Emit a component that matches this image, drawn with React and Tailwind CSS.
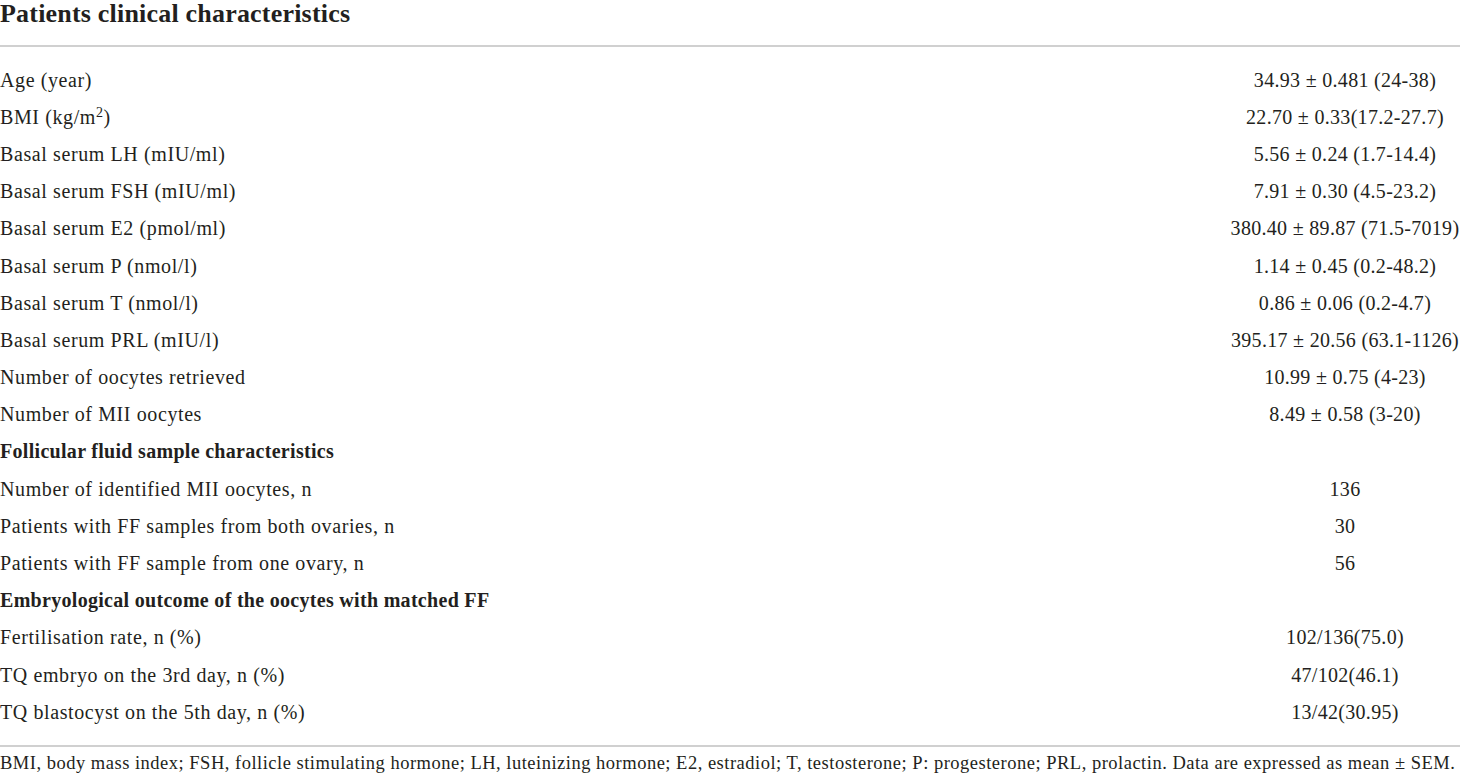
const rows = [
  { label: "Age (year)", value: "34.93 ± 0.481 (24-38)" },
  {
    label: (
      <>
        BMI (kg/m<sup className="text-[14px]">2</sup>)
      </>
    ),
    value: "22.70 ± 0.33(17.2-27.7)",
  },
  { label: "Basal serum LH (mIU/ml)", value: "5.56 ± 0.24 (1.7-14.4)" },
  { label: "Basal serum FSH (mIU/ml)", value: "7.91 ± 0.30 (4.5-23.2)" },
  { label: "Basal serum E2 (pmol/ml)", value: "380.40 ± 89.87 (71.5-7019)" },
  { label: "Basal serum P (nmol/l)", value: "1.14 ± 0.45 (0.2-48.2)" },
  { label: "Basal serum T (nmol/l)", value: "0.86 ± 0.06 (0.2-4.7)" },
  { label: "Basal serum PRL (mIU/l)", value: "395.17 ± 20.56 (63.1-1126)" },
  { label: "Number of oocytes retrieved", value: "10.99 ± 0.75 (4-23)" },
  { label: "Number of MII oocytes", value: "8.49 ± 0.58 (3-20)" },
  { label: "Follicular fluid sample characteristics", section: true },
  { label: "Number of identified MII oocytes, n", value: "136" },
  { label: "Patients with FF samples from both ovaries, n", value: "30" },
  { label: "Patients with FF sample from one ovary, n", value: "56" },
  { label: "Embryological outcome of the oocytes with matched FF", section: true },
  { label: "Fertilisation rate, n (%)", value: "102/136(75.0)" },
  { label: "TQ embryo on the 3rd day, n (%)", value: "47/102(46.1)" },
  { label: "TQ blastocyst on the 5th day, n (%)", value: "13/42(30.95)" },
];

const Row = ({ row }) => (
  <div className="grid grid-cols-[1fr_230px] h-[37.2px] items-center">
    <div className={row.section ? "font-bold tracking-[0.3px]" : "tracking-[0.6px]"}>
      {row.label}
    </div>
    <div className="text-center whitespace-nowrap tracking-[0.3px]">{row.value}</div>
  </div>
);

export default function App() {
  return (
    <div
      className="w-[1460px] h-[781px] bg-white text-[#231f20] overflow-hidden"
      style={{ fontFamily: '"Liberation Serif", "Times New Roman", serif' }}
    >
      <div className="h-[45px]">
        <h1 className="text-[26px] font-bold leading-[28px] tracking-[0.2px]">
          Patients clinical characteristics
        </h1>
      </div>
      <div className="h-[2px] bg-[#d0d0d0]" />
      <div className="pt-[14px] pb-[15px] text-[20px] leading-[24px]">
        {rows.map((row, i) => (
          <Row key={i} row={row} />
        ))}
      </div>
      <div className="h-[2px] bg-[#d0d0d0]" />
      <div className="pt-[4px] text-[18.5px] leading-[24px] tracking-[0.5px] whitespace-nowrap">
        BMI, body mass index; FSH, follicle stimulating hormone; LH, luteinizing
        hormone; E2, estradiol; T, testosterone; P: progesterone; PRL, prolactin.
        Data are expressed as mean ± SEM.
      </div>
    </div>
  );
}
